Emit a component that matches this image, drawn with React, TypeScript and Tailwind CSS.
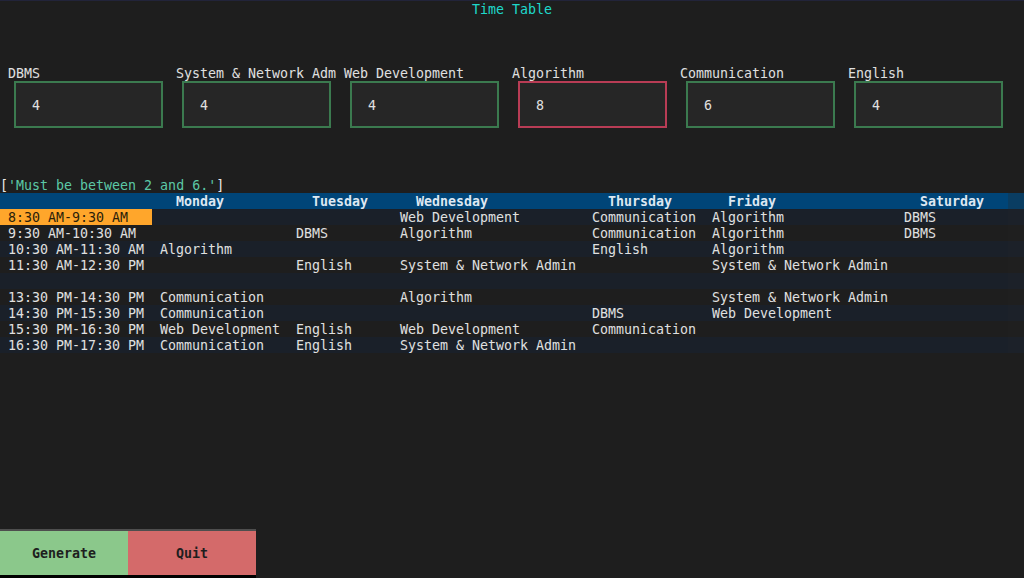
import React from "react";

const subjects: { name: string; value: string; error?: boolean }[] = [
  { name: "DBMS", value: "4" },
  { name: "System & Network Adm", value: "4" },
  { name: "Web Development", value: "4" },
  { name: "Algorithm", value: "8", error: true },
  { name: "Communication", value: "6" },
  { name: "English", value: "4" },
];

const widths = [152, 136, 104, 192, 120, 192, 112];
const headers = ["", "Monday", "Tuesday", "Wednesday", "Thursday", "Friday", "Saturday"];

const rows: string[][] = [
  ["8:30 AM-9:30 AM", "", "", "Web Development", "Communication", "Algorithm", "DBMS"],
  ["9:30 AM-10:30 AM", "", "DBMS", "Algorithm", "Communication", "Algorithm", "DBMS"],
  ["10:30 AM-11:30 AM", "Algorithm", "", "", "English", "Algorithm", ""],
  ["11:30 AM-12:30 PM", "", "English", "System & Network Admin", "", "System & Network Admin", ""],
  ["", "", "", "", "", "", ""],
  ["13:30 PM-14:30 PM", "Communication", "", "Algorithm", "", "System & Network Admin", ""],
  ["14:30 PM-15:30 PM", "Communication", "", "", "DBMS", "Web Development", ""],
  ["15:30 PM-16:30 PM", "Web Development", "English", "Web Development", "Communication", "", ""],
  ["16:30 PM-17:30 PM", "Communication", "English", "System & Network Admin", "", "", ""],
];

export default function App() {
  return (
    <div
      className="w-[1024px] h-[578px] bg-[#1e1e1e] flex flex-col text-[#e0e0e0] text-[13.3px] leading-[18px] whitespace-pre overflow-hidden"
      style={{ fontFamily: '"DejaVu Sans Mono", "Liberation Mono", monospace' }}
    >
      <div className="h-[1px] shrink-0 bg-[#22243a]" />
      <div className="h-4 shrink-0 flex justify-center text-[#1ed8cc]">Time Table</div>
      <div className="h-12 shrink-0" />
      <div className="flex pl-2 shrink-0">
        {subjects.map((s) => (
          <div key={s.name} className="w-[168px] flex flex-col">
            <div className="h-4">{s.name}</div>
            <div className="h-12 pl-[6px]">
              <div
                className={`w-[149px] h-[47px] border-2 bg-[#262626] pl-4 pt-[2px] flex items-center ${
                  s.error ? "border-[#b83c55]" : "border-[#3b7a4f]"
                }`}
              >
                {s.value}
              </div>
            </div>
          </div>
        ))}
      </div>
      <div className="h-12 shrink-0" />
      <div className="h-4 shrink-0">
        <span className="text-[#e8e8e8]">[</span>
        <span className="text-[#5cc8a6]">'Must be between 2 and 6.'</span>
        <span className="text-[#e8e8e8]">]</span>
      </div>
      <div className="flex flex-col shrink-0">
        <div className="h-4 flex bg-[#004578] font-bold text-[#dde8f2]">
          {headers.map((h, i) => (
            <div key={i} style={{ width: widths[i] }} className="pl-6">
              {h}
            </div>
          ))}
          <div className="flex-1" />
          <div className="w-4 bg-[#0a3d62]" />
        </div>
        {rows.map((r, ri) => (
          <div key={ri} className={`h-4 flex ${ri % 2 === 0 ? "bg-[#1a2029]" : "bg-[#1e1e1e]"}`}>
            {r.map((c, ci) => (
              <div
                key={ci}
                style={{ width: widths[ci] }}
                className={`px-2 ${ri === 0 && ci === 0 ? "bg-[#ffa62b] text-[#2a1e0a]" : ""}`}
              >
                {c}
              </div>
            ))}
            <div className="flex-1" />
            <div className={`w-4 ${ri % 2 === 0 ? "bg-[#1c2129]" : "bg-[#1f1f1f]"}`} />
          </div>
        ))}
      </div>
      <div className="mt-auto flex h-[50px] shrink-0">
        <div className="w-32 flex flex-col pt-[1px]">
          <div className="h-[2px] bg-[#4e4e4e]" />
          <div className="flex-1 bg-[#8bc88b] text-[#1e1e1e] font-bold flex items-center justify-center pt-[2px]">Generate</div>
          <div className="h-[3px] bg-[#000]" />
        </div>
        <div className="w-32 flex flex-col pt-[1px]">
          <div className="h-[2px] bg-[#4e4e4e]" />
          <div className="flex-1 bg-[#d46a6a] text-[#1e1e1e] font-bold flex items-center justify-center pt-[2px]">Quit</div>
          <div className="h-[3px] bg-[#000]" />
        </div>
      </div>
    </div>
  );
}
